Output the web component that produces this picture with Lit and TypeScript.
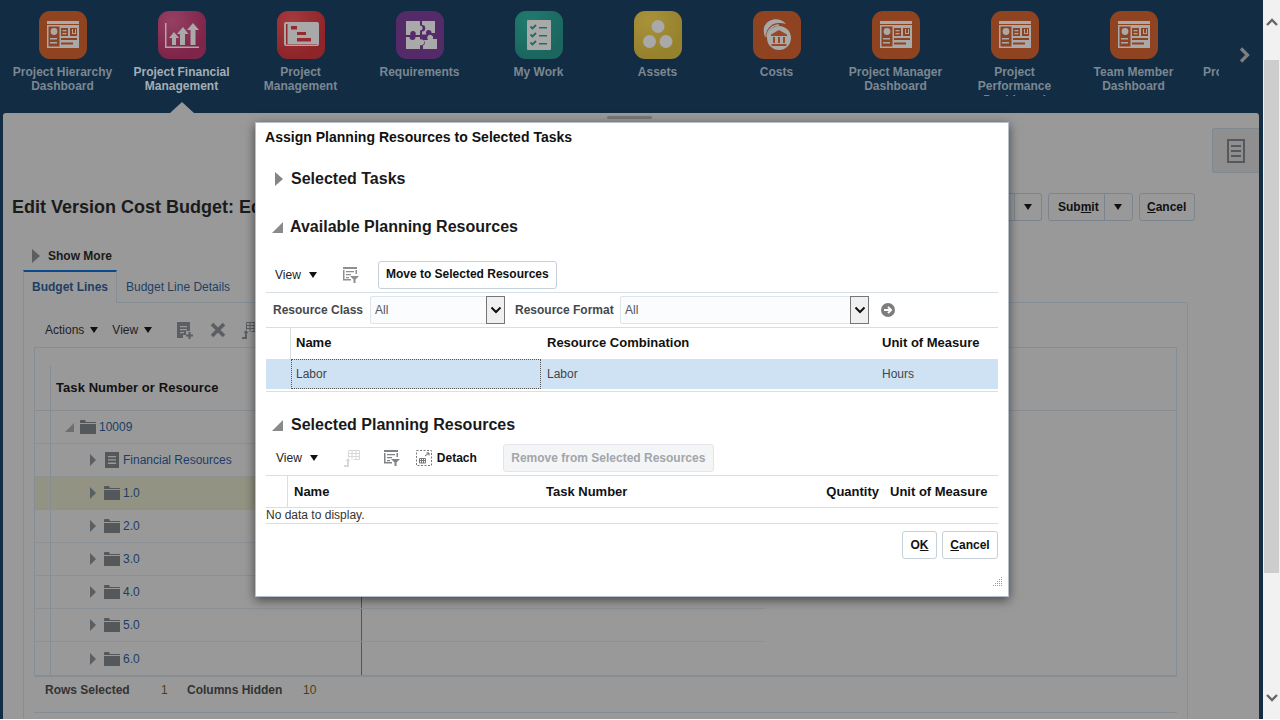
import { LitElement, html, css, svg } from "lit";
import { customElement } from "lit/decorators.js";

const G = "#a9a9a9";
const dash = (c: string) => svg`<svg viewBox="0 0 48 48" width="48" height="48">
  <rect x="8" y="10" width="32" height="3" fill="${G}"/><rect x="8" y="14" width="32" height="23" fill="${G}"/>
  <rect x="9.5" y="15.5" width="11" height="20" fill="${c}"/><rect x="22" y="17" width="7" height="8" fill="${c}"/><rect x="31" y="17" width="7" height="8" fill="${c}"/>
  <circle cx="15" cy="20.5" r="3.4" fill="${G}"/><rect x="11" y="27" width="7" height="1.5" fill="${G}"/><rect x="11" y="31" width="7" height="1.5" fill="${G}"/>
  <rect x="23.5" y="19" width="4" height="1.3" fill="${G}"/><rect x="23.5" y="22" width="4" height="1.3" fill="${G}"/>
  <path d="M33 18v5h4v-5h-1v4h-2v-4z" fill="${G}"/>
  <rect x="22" y="27" width="16" height="2" fill="${c}"/><rect x="22" y="31.5" width="12" height="2" fill="${c}"/></svg>`;
const chart = svg`<svg viewBox="0 0 48 48" width="48" height="48"><path fill="${G}" d="M7 12h1.500v23.500H41V37H7z"/>
  <path fill="${G}" d="M16 21l5 6h-3v7h-4v-7h-3zM25 16l5.500 7h-3.500v11h-5V23h-3zM35 12l6 7h-3.500v15h-5V19H29z"/></svg>`;
const gantt = svg`<svg viewBox="0 0 48 48" width="48" height="48"><path fill="${G}" d="M9 11h31q2 0 2 2v20q0 2-2 2H9q-2 0-2-2V13q0-2 2-2z"/>
  <path fill="#962a2e" d="M9 13h1.500v20H40v.5H9zM14 15h6v3.500h-6zM20 21h9v3h-9zM20 27h14v3.500H20z"/></svg>`;
const puzzle = svg`<svg viewBox="0 0 48 48" width="48" height="48">
  <path fill="${G}" d="M10 10h14v4.500a2.500 2.500 0 1 1 0 5V24h-4.500a2.800 2.800 0 1 0-5 0H10z"/>
  <path fill="${G}" d="M26 10h13v12h-3.500a2.800 2.800 0 1 0-5 1.500H26v-3a3 3 0 0 0 0-6.500z"/>
  <path fill="${G}" d="M10 26h3.500a3 3 0 1 0 6 0H24v2.500a3 3 0 1 1 0 5.500v4H10z"/>
  <path fill="${G}" d="M27 29h5a3 3 0 1 1 5-1h4v10H27v-3.500a3 3 0 0 0 0-5.500z"/></svg>`;
const work = svg`<svg viewBox="0 0 48 48" width="48" height="48"><rect x="12" y="9" width="24" height="30" rx="1" fill="${G}"/>
  <g fill="none" stroke="#1b7067" stroke-width="1.800"><path d="M15.500 15.500l2 2 3.500-3.500M15.500 23.500l2 2 3.500-3.500M15.500 31.500l2 2 3.500-3.500"/></g>
  <path fill="#1b7067" d="M24 16h8v1.500h-8zM24 24h8v1.500h-8zM24 32h8v1.500h-8z"/></svg>`;
const assets = svg`<svg viewBox="0 0 48 48" width="48" height="48"><g fill="${G}"><circle cx="24" cy="15.500" r="6.500"/><circle cx="15.500" cy="30.500" r="6.500"/><circle cx="32" cy="30.500" r="6.500"/></g></svg>`;
const costs = svg`<svg viewBox="0 0 48 48" width="48" height="48"><path fill="${G}" d="M33 13a13 13 0 0 0-21.500 2q-2 6 1 12q0-9 7-13.500q6-2.500 13.500-.5z"/>
  <path fill="none" stroke="${G}" stroke-width="1.500" d="M14 26a12 12 0 0 1 12-12"/>
  <circle cx="26" cy="27" r="12" fill="${G}"/><path fill="#984a26" d="M26 19l8 4.500v1.500H18v-1.500zM20 26h2v6h-2zM25 26h2v6h-2zM30 26h2v6h-2zM18.500 33h15v2h-15z"/></svg>`;

const apps = [
  { l: ["Project Hierarchy", "Dashboard"], c: "orange", i: dash("#8f4320") },
  { l: ["Project Financial", "Management"], c: "pink", i: chart, on: true },
  { l: ["Project", "Management"], c: "red", i: gantt },
  { l: ["Requirements"], c: "purple", i: puzzle },
  { l: ["My Work"], c: "teal", i: work },
  { l: ["Assets"], c: "yellow", i: assets },
  { l: ["Costs"], c: "orange", i: costs },
  { l: ["Project Manager", "Dashboard"], c: "orange", i: dash("#8f4320") },
  { l: ["Project", "Performance", "Dashboard"], c: "orange", i: dash("#8f4320") },
  { l: ["Team Member", "Dashboard"], c: "orange", i: dash("#8f4320") },
];

const tri = (cls = "") => html`<span class="tri ${cls}"></span>`;
const corner = html`<span class="corner"></span>`;
const filterIcon = (c: string) => svg`<svg viewBox="0 0 16 16" width="16" height="16"><path fill="${c}" d="M0 0h14v2H0zM0 3h1.500v9H8v1.500H0zM3 4h8v1.200H3zM3 7h5v1.200H3zM3 10h3v1.200H3z"/><path fill="${c}" d="M7 9h9l-3.500 3.500V16h-2v-3.500z"/><path fill="${c}" d="M12.500 3H14v4h-1.500z"/></svg>`;
const freezeIcon = (c: string) => svg`<svg viewBox="0 0 16 17" width="16" height="17"><path fill="none" stroke="${c}" d="M4.500.5h11v9h-6M4.500.5v7M8 .5v9M12 .5v9M4.500 3.500h11M4.500 6.500h11"/><path fill="${c}" d="M0 15h3v-4H1.500L4 8l2.500 3H5v6H0z"/></svg>`;

@customElement("app-root")
export class AppRoot extends LitElement {
  static styles = css`
    :host { display: block; width: 1280px; height: 720px; position: relative; overflow: hidden; background: #fff; font-family: "Liberation Sans", Arial, sans-serif; font-size: 12px; color: #1a1a1a; }
    * { box-sizing: border-box; }
    .page { display: flex; height: 719px; }
    .main { width: 1263px; background: #122c44; display: flex; flex-direction: column; }
    .scroll { width: 17px; background: #f1f1f1; display: flex; flex-direction: column; padding: 0 1px; }
    .sb-btn { height: 60px; display: flex; align-items: flex-start; justify-content: center; padding-top: 18px; }
    .sb-btn.sb-dn { height: 146px; align-items: flex-end; padding: 0 0 17px; }
    .thumb { height: 513px; background: #cdcdcd; }

    .strip { height: 102px; position: relative; display: flex; padding-left: 3px; }
    .apps { width: 1216px; height: 96px; display: flex; overflow: hidden; }
    .app { flex: 0 0 119px; display: flex; flex-direction: column; align-items: center; padding-top: 11px; }
    .tile { width: 48px; height: 48px; border-radius: 11px; display: block; }
    .tile svg { display: block; }
    .orange { background: #8f4320; }
    .pink { background: radial-gradient(circle at 30% 20%, #964063, #7e2549 70%); }
    .red { background: radial-gradient(circle at 30% 20%, #a53a3e, #8e2529 70%); }
    .purple { background: #552a68; }
    .teal { background: radial-gradient(circle at 30% 20%, #217a6e, #1b675f 70%); }
    .yellow { background: radial-gradient(circle at 30% 20%, #a8923a, #96812d 70%); }
    .app-l { margin-top: 6px; text-align: center; font-weight: 700; line-height: 14px; color: #7b8791; white-space: nowrap; }
    .app.on .app-l { color: #a3aeb7; }
    .clip-pro { flex: 0 0 26px; padding: 65px 0 0 10px; overflow: hidden; font-weight: 700; line-height: 14px; color: #7b8791; white-space: nowrap; }
    .next { margin: 47px 0 0 20px; }
    .notch { position: absolute; left: 170px; top: 102px; }

    .panel { flex: 1; margin: 11px 4px 0 3px; background: #999; border-radius: 3px 3px 0 0; position: relative; display: flex; flex-direction: column; }
    .grab { position: absolute; left: 604px; top: 3px; width: 45px; height: 3px; background: #777; border-radius: 2px; }
    .head { height: 108px; display: flex; padding-top: 80px; position: relative; }
    .page-title { margin: 4px 0 0 9px; font-size: 18px; font-weight: 700; line-height: 20px; width: 243px; overflow: hidden; white-space: nowrap; color: #1b1b1b; }
    .side { position: absolute; right: 0; top: 15px; width: 47px; height: 45px; background: #8f8f8f; border: 1px solid #808890; border-right: 0; border-radius: 3px 0 0 3px; display: flex; align-items: center; justify-content: center; }
    .actions { position: absolute; top: 80px; left: 950px; display: flex; gap: 6px; }
    .bbtn { height: 28px; border: 1px solid #7c858e; border-radius: 3px; display: flex; align-items: center; font-weight: 700; color: #111; }
    .bbtn .t { padding: 0 5px 0 9px; height: 100%; display: flex; align-items: center; border-right: 1px solid #7c858e; }
    .bbtn .d { width: 27px; height: 100%; display: flex; align-items: center; justify-content: center; }
    .bbtn.part { width: 89px; justify-content: flex-end; border-left: 0; }
    .bbtn.part .d { border-left: 1px solid #7c858e; }
    .cancelb { width: 56px; justify-content: center; }
    .down { width: 0; height: 0; border: 4.500px solid transparent; border-top: 6px solid #111; border-bottom: 0; display: inline-block; }

    .show { height: 28px; margin-top: 21px; display: flex; align-items: center; padding-left: 29px; gap: 8px; font-weight: 700; }
    .tri { width: 0; height: 0; border-left: 8px solid #5a5f64; border-top: 7px solid transparent; border-bottom: 7px solid transparent; display: inline-block; }
    .tri.sm { border-left-width: 6px; border-top-width: 6px; border-bottom-width: 6px; }
    .corner { width: 0; height: 0; border-bottom: 11px solid #6e6e6e; border-left: 11px solid transparent; display: inline-block; }
    .tabs { height: 33px; margin-left: 20px; display: flex; width: 1164px; border-bottom: 1px solid #868e94; }
    .tab { padding: 0 8px; line-height: 30px; color: #1f3f63; white-space: nowrap; }
    .tab.on { width: 94px; border-top: 2px solid #0a4a8a; border-left: 1px solid #868e94; border-right: 1px solid #868e94; font-weight: 700; height: 33px; background: #999; }
    .tab.off { padding-left: 9px; padding-top: 2px; }
    .content { flex: 1; margin-left: 20px; width: 1165px; border-left: 1px solid #868e94; border-right: 1px solid #868e94; padding: 0 10px; display: flex; flex-direction: column; }
    .tb { height: 44px; flex: none; display: flex; align-items: center; padding: 10px 0 0 11px; color: #1e1e1e; }
    .tb .lab { margin-right: 6px; }
    .tb .act { margin-right: 14px; }
    .tb .vw { margin-right: 25px; }
    .tb svg { margin-right: 16px; flex: none; }
    .grid { width: 1143px; height: 330px; flex: none; border: 1px solid #868e94; border-bottom-width: 2px; display: flex; flex-direction: column; }
    .gh { height: 63px; flex: none; border-bottom: 1px solid #868e94; display: flex; }
    .gh .c0 { width: 16px; margin-top: 18px; border-right: 1px solid #868e94; }
    .gh .t { padding: 32px 0 0 5px; font-size: 13px; font-weight: 700; color: #111; line-height: 16px; letter-spacing: .07px; }
    .row { height: 33px; flex: none; border-bottom: 1px solid #8b9095; display: flex; width: 730px; }
    .row:last-child { border-bottom: 0; }
    .row.hl { background: #939383; }
    .row .c0 { width: 16px; border-right: 1px solid #868e94; }
    .row .c1 { width: 311px; border-right: 1px solid #1f6a80; display: flex; align-items: center; color: #1b3d66; padding-left: var(--p, 39px); }
    .row .c1 span, .row .c1 svg { flex: none; }
    .row .c1 svg.fo { margin: 0 3px 0 8px; }
    .row .c1 svg.fo.open { margin-left: 6px; }
    .row .c1 svg.dc { margin: 0 4px 0 9px; }
    .foot { height: 35px; flex: none; display: flex; align-items: center; font-weight: 700; color: #333; padding: 0 0 9px 11px; }
    .foot b { color: #4a4218; font-weight: 400; }
    .foot-line { width: 1143px; height: 1px; background: #868e94; }

    .overlay { position: absolute; left: 255px; top: 122px; width: 754px; height: 475px; background: #fff; border: 1px solid #b4c0cb; box-shadow: 0 3px 10px rgba(0, 0, 0, .55); padding: 0 10px; color: #111; }
    .overlay .tri { border-left-color: #858585; }
    .overlay .corner { border-bottom-color: #8a8a8a; }
    .m-title { height: 28px; line-height: 28px; margin-left: -1px; font-size: 14px; font-weight: 700; letter-spacing: .02px; }
    .h { font-size: 16px; font-weight: 700; line-height: 24px; height: 24px; display: flex; align-items: center; color: #1a1a1a; white-space: nowrap; }
    .h.a { margin: 16px 0 0 9px; gap: 8px; }
    .h.b { margin: 24px 0 0 6px; gap: 7px; }
    .h.c { margin: 21px 0 0 6px; gap: 8px; }
    .bar { height: 28px; margin-top: 22px; display: flex; align-items: center; padding-left: 9px; }
    .bar .view { color: #222; margin-right: 8px; }
    .bar .down { margin-right: 26px; }
    .btn { height: 28px; border: 1px solid #c6d0d9; border-radius: 3px; font-weight: 700; display: flex; align-items: center; justify-content: center; background: #fff; }
    .btn.mv { width: 179px; margin-left: 19px; padding-bottom: 2px; }
    .fr { height: 36px; margin-top: 3px; border-top: 1px solid #d6dfe6; border-bottom: 1px solid #d6dfe6; display: flex; align-items: center; padding-left: 7px; color: #44494e; font-weight: 700; }
    .sel-box { height: 28px; border: 1px solid #dde4ea; border-radius: 2px; background: #fbfcfe; display: flex; align-items: center; justify-content: space-between; padding-left: 4px; font-weight: 400; color: #555; }
    .arrow { width: 19px; height: 28px; margin: -1px -1px -1px 0; background: #f0f0f0; border: 1px solid #767676; display: flex; align-items: center; justify-content: center; }
    .th { display: grid; height: 31px; align-items: center; font-size: 13px; font-weight: 700; color: #111; }
    .th.one, .tr { grid-template-columns: 25px 250px 335px 1fr; }
    .th.one > div { padding-bottom: 2px; }
    .th.two { height: 32px; grid-template-columns: 22px 252px 280px 64px 1fr; }
    .th > div { height: 100%; display: flex; align-items: center; padding-left: 6px; white-space: nowrap; }
    .th.one > div:nth-child(2) { padding-left: 5px; }
    .th > div:first-child { border-right: 1px solid #d6dfe6; padding: 0; }
    .th .r { justify-content: flex-end; padding: 0 5px 0 0; }
    .tr { display: grid; height: 30px; background: #cfe2f3; align-items: center; color: #444; }
    .tr > div { height: 100%; display: flex; align-items: center; padding-left: 6px; }
    .tr .f { outline: 1px dotted #555; outline-offset: -1px; padding-left: 5px; }
    .rule { height: 1px; background: #d6dfe6; margin-top: 2px; }
    .sub { height: 28px; margin-top: 7px; display: flex; align-items: center; padding-left: 10px; }
    .sub .view { margin-right: 8px; color: #222; }
    .sub .down { margin-right: 26px; }
    .sub .i2 { margin-right: 24px; display: flex; }
    .sub .i3 { margin-right: 16px; display: flex; }
    .sub .det { font-weight: 700; color: #111; margin: 0 26px 0 5px; }
    .btn.off { background: #f4f5f7; color: #a2a6aa; border-color: #e2e6ea; width: 211px; }
    .t2 { margin-top: 3px; border-top: 1px solid #d6dfe6; }
    .nod { border-top: 1px solid #d6dfe6; border-bottom: 1px solid #d6dfe6; height: 17px; line-height: 14px; color: #333; }
    .btns { display: flex; justify-content: flex-end; gap: 5px; margin-top: 7px; }
    .btn.ok { width: 35px; }
    .btn.cn { width: 56px; }
    .grip { position: absolute; right: 5px; bottom: 9px; }
  `;

  private rowEl(label: string, pad: number, hl = false, kind: "folder" | "doc" = "folder", open = false) {
    return html`<div class="row ${hl ? "hl" : ""}"><div class="c0"></div><div class="c1" style="--p:${pad}px">
      ${open ? html`<span class="corner" style="border-bottom-width:9px;border-left-width:9px"></span>` : tri("sm")}
      ${kind === "folder"
        ? svg`<svg class="fo ${open ? "open" : ""}" viewBox="0 0 16 14" width="16" height="14"><path fill="#55585b" d="M0 1q0-1 1-1h4l1 2h10v1H0zM0 4h16v10H0z"/></svg>`
        : svg`<svg class="dc" viewBox="0 0 14 16" width="14" height="16"><rect width="14" height="16" fill="#55585b"/><path fill="#9a9a9a" d="M3 4h8v1.300H3zM3 7.300h8v1.300H3zM3 10.600h8v1.300H3z"/></svg>`}
      <span>${label}</span></div></div>`;
  }

  render() {
    const sbUp = svg`<svg width="12" height="8" viewBox="0 0 12 8"><path d="M1 7l5-5 5 5" fill="none" stroke="#666" stroke-width="2.400"/></svg>`;
    const sbDown = svg`<svg width="12" height="8" viewBox="0 0 12 8"><path d="M1 1l5 5 5-5" fill="none" stroke="#666" stroke-width="2.400"/></svg>`;
    const chev = svg`<svg width="12" height="8" viewBox="0 0 12 8"><path d="M1.500 1.500L6 6l4.500-4.500" fill="none" stroke="#111" stroke-width="2"/></svg>`;
    return html`
      <div class="page">
        <div class="main">
          <div class="strip">
            <div class="apps">
              ${apps.map((a) => html`<div class="app ${a.on ? "on" : ""}">
                <span class="tile ${a.c}">${a.i}</span>
                <div class="app-l">${a.l.map((t) => html`${t}<br />`)}</div>
              </div>`)}
              <div class="clip-pro">Project</div>
            </div>
            <svg class="next" width="12" height="16" viewBox="0 0 12 16"><path d="M2 1.500L8.500 8 2 14.500" fill="none" stroke="#7f7f7f" stroke-width="3.200"/></svg>
            <svg class="notch" width="24" height="11" viewBox="0 0 24 11"><path d="M0 11L12 0l12 11z" fill="#999"/></svg>
          </div>
          <div class="panel">
            <div class="grab"></div>
            <div class="head">
              <div class="page-title">Edit Version Cost Budget: Edit</div>
              <div class="side"><svg width="18" height="24" viewBox="0 0 18 24"><rect x="1" y="1" width="16" height="22" fill="none" stroke="#55595d" stroke-width="2"/><path fill="#55595d" d="M4 6h10v2H4zM4 11h10v2H4zM4 16h10v2H4z"/></svg></div>
              <div class="actions">
                <div class="bbtn part"><div class="d"><span class="down"></span></div></div>
                <div class="bbtn"><div class="t"><span>Sub<u>m</u>it</span></div><div class="d"><span class="down"></span></div></div>
                <div class="bbtn cancelb"><span><u>C</u>ancel</span></div>
              </div>
            </div>
            <div class="show">${tri()}<span>Show More</span></div>
            <div class="tabs"><div class="tab on">Budget Lines</div><div class="tab off">Budget Line Details</div></div>
            <div class="content">
              <div class="tb">
                <span class="lab">Actions</span><span class="down act"></span>
                <span class="lab">View</span><span class="down vw"></span>
                ${svg`<svg width="17" height="17" viewBox="0 0 17 17"><path fill="#5b5f63" d="M0 0h13v9H9v4H6v3H0z"/><path fill="#999" d="M3 4h7v1.200H3zM3 7h7v1.200H3zM3 10h4v1.200H3z"/><path fill="#5b5f63" d="M11.500 10h2v2.500H16v2h-2.500V17h-2v-2.500H9v-2h2.500z"/></svg>`}
                ${svg`<svg width="16" height="16" viewBox="0 0 16 16"><path d="M2 2l12 12M14 2L2 14" stroke="#5b5f63" stroke-width="3.600"/></svg>`}
                ${freezeIcon("#5b5f63")}
              </div>
              <div class="grid">
                <div class="gh"><div class="c0"></div><div class="t">Task Number or Resource</div></div>
                ${this.rowEl("10009", 14, false, "folder", true)}
                ${this.rowEl("Financial Resources", 39, false, "doc")}
                ${this.rowEl("1.0", 39, true)}
                ${this.rowEl("2.0", 39)}
                ${this.rowEl("3.0", 39)}
                ${this.rowEl("4.0", 39)}
                ${this.rowEl("5.0", 39)}
                ${this.rowEl("6.0", 39)}
              </div>
              <div class="foot">
                <span style="width:116px">Rows Selected</span><b style="width:26px">1</b>
                <span style="width:116px">Columns Hidden</span><b>10</b>
              </div>
              <div class="foot-line"></div>
            </div>
          </div>
        </div>
        <div class="scroll">
          <div class="sb-btn">${sbUp}</div>
          <div class="thumb"></div>
          <div class="sb-btn sb-dn">${sbDown}</div>
        </div>
      </div>

      <div class="overlay">
        <div class="m-title">Assign Planning Resources to Selected Tasks</div>
        <div class="h a">${tri()}<span>Selected Tasks</span></div>
        <div class="h b">${corner}<span>Available Planning Resources</span></div>
        <div class="bar">
          <span class="view">View</span><span class="down"></span>
          ${filterIcon("#8d8f91")}
          <div class="btn mv">Move to Selected Resources</div>
        </div>
        <div class="fr">
          <span style="width:97px">Resource Class</span>
          <div class="sel-box" style="width:135px"><span>All</span><span class="arrow">${chev}</span></div>
          <span style="margin-left:10px;width:105px">Resource Format</span>
          <div class="sel-box" style="width:249px"><span>All</span><span class="arrow">${chev}</span></div>
          <svg style="margin-left:12px" width="14" height="14" viewBox="0 0 14 14"><circle cx="7" cy="7" r="7" fill="#7d7d7d"/><path d="M3 7h7M7 3.800L10.200 7 7 10.200" fill="none" stroke="#fff" stroke-width="1.800"/></svg>
        </div>
        <div class="th one"><div></div><div>Name</div><div>Resource Combination</div><div>Unit of Measure</div></div>
        <div class="tr"><div></div><div class="f">Labor</div><div>Labor</div><div>Hours</div></div>
        <div class="rule"></div>
        <div class="h c">${corner}<span>Selected Planning Resources</span></div>
        <div class="sub">
          <span class="view">View</span><span class="down"></span>
          <span class="i2">${freezeIcon("#d8d8d8")}</span>
          <span class="i3">${filterIcon("#808386")}</span>
          ${svg`<svg width="16" height="16" viewBox="0 0 16 16"><rect x=".5" y=".5" width="15" height="15" fill="none" stroke="#777" stroke-dasharray="2 1.500"/><path fill="none" stroke="#777" d="M3.500 8.500h6v4.500h-6zM5.500 8.500v4.500M7.500 8.500v4.500M3.500 10.500h6"/><path d="M9 6l4-3M10.500 3H13v2.500" fill="none" stroke="#666"/></svg>`}
          <span class="det">Detach</span>
          <div class="btn off">Remove from Selected Resources</div>
        </div>
        <div class="th two t2"><div></div><div>Name</div><div>Task Number</div><div class="r">Quantity</div><div>Unit of Measure</div></div>
        <div class="nod">No data to display.</div>
        <div class="btns">
          <div class="btn ok"><span>O<u>K</u></span></div>
          <div class="btn cn"><span><u>C</u>ancel</span></div>
        </div>
        <svg class="grip" width="10" height="10" viewBox="0 0 10 10"><path fill="#999" d="M8 0h1v1H8zM8 2h1v1H8zM6 2h1v1H6zM8 4h1v1H8zM6 4h1v1H6zM4 4h1v1H4zM8 6h1v1H8zM6 6h1v1H6zM4 6h1v1H4zM2 6h1v1H2zM8 8h1v1H8zM6 8h1v1H6zM4 8h1v1H4zM2 8h1v1H2zM0 8h1v1H0z"/></svg>
      </div>
    `;
  }
}
